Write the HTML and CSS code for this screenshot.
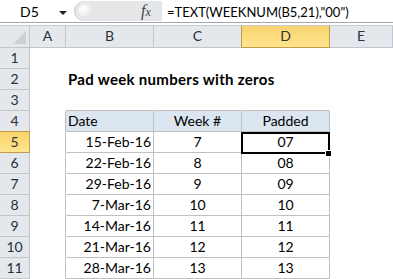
FILE: index.html
```html
<!DOCTYPE html>
<html>
<head>
	<meta http-equiv="Content-Type" content="text/html; charset=utf-8" />
	<title>Pad week numbers with zeros</title>
	<link rel="stylesheet" href="styles.css">
</head>
<body>
	<!-- formula bar -->
	<div class="fbar">
		<div class="namebox"><span class="ref">D5</span><span class="drop"></span></div>
		<div class="split"><span class="knob"></span><span class="fx"><i>f</i><i class="x">x</i></span></div>
		<div class="formula">=TEXT(WEEKNUM(B5,21),"00")</div>
	</div>
	<div class="fgap"></div>

	<!-- sheet -->
	<div class="sheet">
		<div class="row heads">
			<div class="corner"><span class="tri"></span></div>
			<div class="ch">A</div>
			<div class="ch">B</div>
			<div class="ch">C</div>
			<div class="ch sel">D</div>
			<div class="ch">E</div>
		</div>
		<div class="row">
			<div class="rh">1</div><div class="c"></div><div class="c"></div><div class="c"></div><div class="c"></div><div class="c"></div>
		</div>
		<div class="row">
			<div class="rh">2</div><div class="c"></div><div class="c title">Pad week numbers with zeros</div><div class="c"></div><div class="c"></div><div class="c"></div>
		</div>
		<div class="row">
			<div class="rh">3</div><div class="c"></div><div class="c above"></div><div class="c above"></div><div class="c above"></div><div class="c"></div>
		</div>
		<div class="row">
			<div class="rh">4</div><div class="c before"></div><div class="c t th left">Date</div><div class="c t th mid">Week #</div><div class="c t th mid">Padded</div><div class="c"></div>
		</div>
		<div class="row">
			<div class="rh sel">5</div><div class="c before"></div><div class="c t right">15-Feb-16</div><div class="c t mid">7</div><div class="c t mid active">07</div><div class="c"></div>
		</div>
		<div class="row">
			<div class="rh">6</div><div class="c before"></div><div class="c t right">22-Feb-16</div><div class="c t mid">8</div><div class="c t mid">08</div><div class="c"></div>
		</div>
		<div class="row">
			<div class="rh">7</div><div class="c before"></div><div class="c t right">29-Feb-16</div><div class="c t mid">9</div><div class="c t mid">09</div><div class="c"></div>
		</div>
		<div class="row">
			<div class="rh">8</div><div class="c before"></div><div class="c t right">7-Mar-16</div><div class="c t mid">10</div><div class="c t mid">10</div><div class="c"></div>
		</div>
		<div class="row">
			<div class="rh">9</div><div class="c before"></div><div class="c t right">14-Mar-16</div><div class="c t mid">11</div><div class="c t mid">11</div><div class="c"></div>
		</div>
		<div class="row">
			<div class="rh">10</div><div class="c before"></div><div class="c t right">21-Mar-16</div><div class="c t mid">12</div><div class="c t mid">12</div><div class="c"></div>
		</div>
		<div class="row">
			<div class="rh">11</div><div class="c before"></div><div class="c t right">28-Mar-16</div><div class="c t mid">13</div><div class="c t mid">13</div><div class="c"></div>
		</div>
	</div>
</body>
</html>
```

FILE: styles.css
```css
body {
    margin: 0;
    font-family: Lato, "Open Sans", sans-serif;
    font-size: 14px;
    color: #000;
    background: #fff;
    overflow: hidden;
}

/* formula bar */
.fbar {
    display: flex;
    height: 22px;
    border-bottom: 1px solid #a3a8b0;
    background: #fff;
}

.namebox {
    position: relative;
    flex: none;
    width: 74px;
    line-height: 24px;
}

.ref {
    position: absolute;
    left: 20px;
    top: 0;
}

.drop {
    position: absolute;
    left: 59px;
    top: 11px;
    border-left: 4px solid transparent;
    border-right: 4px solid transparent;
    border-top: 4px solid #222;
}

.split {
    position: relative;
    flex: none;
    width: 88px;
    margin-top: 1px;
    height: 20px;
    background: #e5e6e8;
    border-radius: 10px 0 0 10px;
    border-left: 1px solid #c3c5c9;
    box-sizing: border-box;
}

.knob {
    position: absolute;
    left: 3px;
    top: 3px;
    width: 13px;
    height: 13px;
    border-radius: 50%;
    background: radial-gradient(circle at 40% 35%, #fff 0%, #eceef0 60%, #d8dade 100%);
}

.fx {
    position: absolute;
    left: 66px;
    top: 1px;
    font-family: "Liberation Serif", serif;
    font-size: 16px;
    color: #444;
}

.fx .x {
    font-size: 12px;
}

.formula {
    padding-left: 5px;
    line-height: 24px;
    font-size: 13px;
    white-space: nowrap;
}

.fgap {
    height: 2px;
    background: #fff;
}

/* grid */
.row {
    display: grid;
    grid-template-columns: 30px 36px 88px 88px 88px 1fr;
    height: 21px;
}

.heads {
    height: 22px;
    border-top: 1px solid #c9ccd1;
}

.corner, .ch, .rh {
    background: #e4e7eb;
    border-right: 1px solid #c3c7cd;
    border-bottom: 1px solid #c3c7cd;
    color: #27303d;
    text-align: center;
    line-height: 20px;
}

.corner {
    position: relative;
}

.tri {
    position: absolute;
    right: 3px;
    bottom: 3px;
    border-left: 13px solid transparent;
    border-bottom: 13px solid #cdd0d5;
}

.ch.sel, .rh.sel {
    background: linear-gradient(#f8d36e, #ffe58e);
    border-color: #c39b4b;
    color: #333;
}

.ch.sel {
    box-shadow: -1px 0 0 #c39b4b;
}

.rh.sel {
    box-shadow: 0 -1px 0 #c39b4b;
}

.c {
    border-right: 1px solid transparent;
    border-bottom: 1px solid transparent;
    line-height: 20px;
    white-space: nowrap;
}

.title {
    font-weight: bold;
    font-size: 15px;
    letter-spacing: 0.3px;
    padding-left: 2px;
}

/* table borders */
.above {
    border-bottom-color: #c0c0c0;
}

.before {
    border-right-color: #c0c0c0;
}

.t {
    border-right-color: #c0c0c0;
    border-bottom-color: #c0c0c0;
}

.th {
    background: #dce6f1;
}

.left {
    padding-left: 2px;
}

.right {
    text-align: right;
    padding-right: 2px;
}

.mid {
    text-align: center;
}

/* active cell */
.active {
    position: relative;
}

.active::before {
    content: "";
    position: absolute;
    left: -1px;
    top: 0;
    width: 89px;
    height: 22px;
    border: 2px solid #000;
    box-sizing: border-box;
}

.active::after {
    content: "";
    position: absolute;
    left: 83px;
    top: 18px;
    width: 5px;
    height: 5px;
    background: #000;
    border: 1px solid #fff;
}
```
